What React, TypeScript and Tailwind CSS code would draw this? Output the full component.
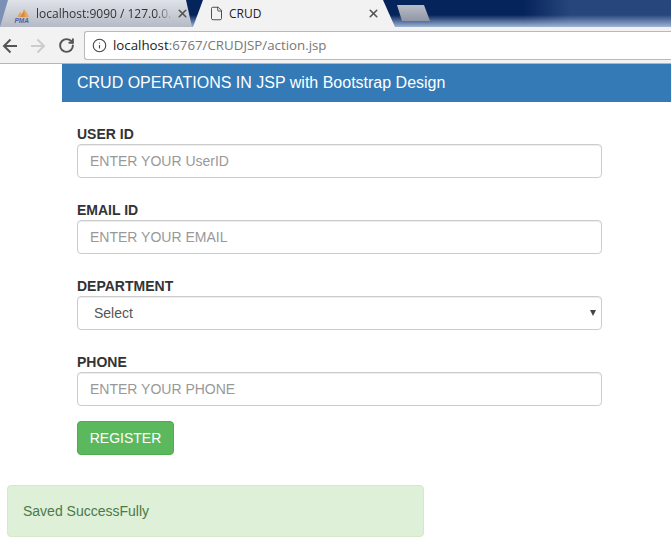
import { RotateCw, Info, File, X } from "lucide-react";

const sans = "font-['Liberation_Sans',Arial,sans-serif]";
const ui = "font-['Open_Sans','Noto_Sans',sans-serif]";

function Field({ label, placeholder, gap }: { label: string; placeholder: string; gap: string }) {
  return (
    <div className={gap}>
      <label className="block h-[20px] text-[14px] leading-[20px] font-bold text-[#333]">{label}</label>
      <input
        placeholder={placeholder}
        className="block h-[34px] w-full rounded border border-[#ccc] bg-white px-3 text-[14px] text-[#555] shadow-[inset_0_1px_1px_rgba(0,0,0,0.075)] outline-none placeholder:text-[#999]"
      />
    </div>
  );
}

function Arrow({ color, flip }: { color: string; flip?: boolean }) {
  return (
    <svg width="16" height="16" viewBox="0 0 16 16" fill="none" stroke={color} strokeWidth="2" className={flip ? "-scale-x-100" : ""}>
      <path d="M15 8H2M8.5 1.5 2 8l6.5 6.5" />
    </svg>
  );
}

export default function App() {
  return (
    <div className={`h-[548px] w-[671px] overflow-hidden bg-white ${sans}`}>
      {/* Browser tab strip */}
      <div className="relative flex h-[27px] bg-[linear-gradient(90deg,#06245c_0%,#06245c_78%,#27477c_85%,#27477c_100%)]">
        <div className="absolute inset-x-0 bottom-0 h-[12px] bg-[linear-gradient(180deg,rgba(60,90,140,0)_0%,#9fb4d6_100%)]" />
        <div className="absolute inset-y-0 left-0 w-[14px] bg-[#7c8fb5]" />
        <div className="relative flex w-[194px] items-center bg-[linear-gradient(180deg,#dfe2e8,#b4bac6)] pl-[14px] [clip-path:polygon(0_100%,8px_0,186px_0,192px_100%)]">
          <svg width="17" height="16" viewBox="0 0 17 16" className="relative top-[2px] shrink-0">
            <path d="M3 9 L6 4 L8 6 L10 1 L13 5 L15 9 Z" fill="#eaa55c" />
            <path d="M6 9 L8 6 L10 3 L11 9 Z" fill="#d98a3c" />
            <text x="0.5" y="15" fontSize="6.5" fontWeight="700" fontStyle="italic" fill="#4c62a6" fontFamily="Liberation Sans">PMA</text>
          </svg>
          <span className={`ml-[5px] w-[138px] overflow-hidden text-[12px] whitespace-nowrap text-[#333] [mask-image:linear-gradient(90deg,#000_86%,transparent)] ${ui}`}>localhost:9090 / 127.0.0.1</span>
          <X size={13} strokeWidth={3} className="ml-[2px] shrink-0 text-[#555]" />
        </div>
        <div className="relative -ml-[1px] flex w-[203px] items-center bg-[#f2f2f2] pl-[16px] [clip-path:polygon(0_100%,10px_0,190px_0,202px_100%)]">
          <File size={15} strokeWidth={1.5} className="shrink-0 text-[#444]" />
          <span className={`ml-[5px] w-[138px] text-[12px] text-[#222] ${ui}`}>CRUD</span>
          <X size={13} strokeWidth={3} className="shrink-0 text-[#555]" />
        </div>
        <div className="relative mt-[5px] ml-[1px] h-[16px] w-[33px] bg-[linear-gradient(180deg,#b9bdc7,#9096a6)] [clip-path:polygon(5px_100%,0_0,27px_0,33px_100%)]" />
      </div>

      {/* Toolbar */}
      <div className="flex h-[37px] items-center border-b border-[#b5b5b5] bg-[#f2f2f2] pt-[1px]">
        <div className="ml-[2px]"><Arrow color="#555" /></div>
        <div className="ml-[12px]"><Arrow color="#ccc" flip /></div>
        <RotateCw size={17} strokeWidth={2.75} className="ml-[12px] text-[#555]" />
        <div className="ml-[9px] flex h-[29px] flex-1 items-center rounded-l-[3px] border border-r-0 border-[#b9b9b9] bg-white pl-[7px]">
          <Info size={15} strokeWidth={1.75} className="shrink-0 text-[#444]" />
          <span className={`ml-[6px] text-[13.3px] whitespace-nowrap text-[#777] ${ui}`}>
            <span className="text-[#222]">localhost</span>:6767/CRUDJSP/action.jsp
          </span>
        </div>
      </div>

      {/* Page */}
      <div className="ml-[62px] flex h-[38px] items-center bg-[#337ab7] pl-[15px] text-[16px] text-white">
        CRUD OPERATIONS IN JSP with Bootstrap Design
      </div>

      <form className="mt-[22px] ml-[77px] w-[525px]">
        <Field gap="mb-[22px]" label="USER ID" placeholder="ENTER YOUR UserID" />
        <Field gap="mb-[22px]" label="EMAIL ID" placeholder="ENTER YOUR EMAIL" />
        <div className="mb-[22px]">
          <label className="block h-[20px] text-[14px] leading-[20px] font-bold text-[#333]">DEPARTMENT</label>
          <div className="relative">
            <select className="block h-[34px] w-full appearance-none rounded border border-[#ccc] bg-white pl-4 text-[14px] text-[#555] shadow-[inset_0_1px_1px_rgba(0,0,0,0.075)] outline-none">
              <option>Select</option>
            </select>
            <span className="absolute top-[14px] right-[6px] h-0 w-0 border-x-[3px] border-t-[6px] border-x-transparent border-t-[#444]" />
          </div>
        </div>
        <Field gap="mb-[15px]" label="PHONE" placeholder="ENTER YOUR PHONE" />
        <button type="button" className="h-[34px] w-[97px] rounded border border-[#4cae4c] bg-[#5cb85c] text-[14px] text-white">
          REGISTER
        </button>
      </form>

      <div className="mt-[30px] ml-[7px] flex h-[52px] w-[417px] items-center rounded border border-[#d6e9c6] bg-[#dff0d8] pl-[15px] text-[14px] text-[#497a4a]">
        Saved SuccessFully
      </div>
    </div>
  );
}
